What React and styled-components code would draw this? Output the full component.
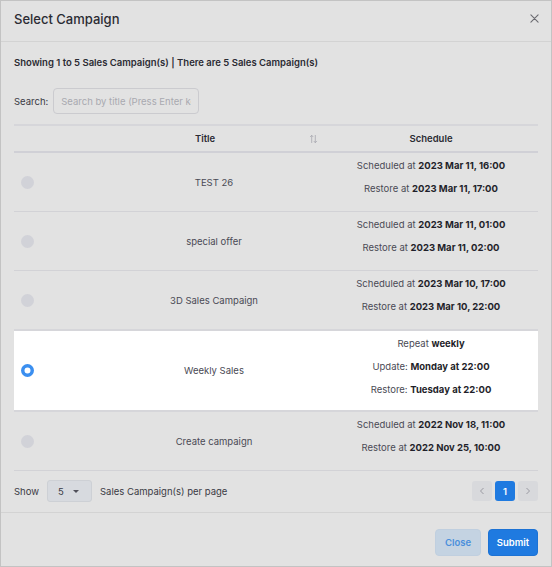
import React, { useState } from 'react';
import styled, { createGlobalStyle, css } from 'styled-components';

const GlobalStyle = createGlobalStyle`
  * { box-sizing: border-box; }
  body {
    margin: 0;
    background: #e2e2e2;
    font-family: Inter, "Noto Sans", sans-serif;
    color: #3a3a44;
  }
`;

const Modal = styled.div`
  width: 552px;
  height: 567px;
  background: #e2e2e2;
  border: 1px solid #c3c3c3;
  display: flex;
  flex-direction: column;
`;

const Header = styled.div`
  height: 41px;
  flex-shrink: 0;
  display: flex;
  align-items: center;
  justify-content: space-between;
  padding: 0 11px 5px 13px;
  border-bottom: 1px solid #d3d3d3;
`;

const Title = styled.h1`
  margin: 0;
  font-size: 13px;
  font-weight: 500;
  color: #2b2b33;
`;

const CloseIcon = styled.button`
  appearance: none;
  border: 0;
  background: none;
  padding: 0;
  width: 12px;
  height: 12px;
  display: flex;
  align-items: center;
  justify-content: center;
  color: #6a6a70;
`;

const Body = styled.div`
  flex: 1;
  padding: 14px 13px 10px 13px;
  display: flex;
  flex-direction: column;
  border-bottom: 1px solid #d3d3d3;
`;

const Summary = styled.div`
  font-size: 9.5px;
  font-weight: 600;
  color: #2b2b33;
  line-height: 14px;
`;

const SearchRow = styled.label`
  display: flex;
  align-items: center;
  gap: 5px;
  margin-top: 18px;
  font-size: 9.5px;
  color: #3a3a44;
`;

const SearchInput = styled.input`
  width: 146px;
  height: 26px;
  border: 1px solid #cbcbcf;
  border-radius: 4px;
  background: transparent;
  padding: 0 7px;
  font-family: inherit;
  font-size: 9.5px;
  outline: none;
  &::placeholder { color: #a9a9b0; }
`;

const Table = styled.table`
  margin-top: 10px;
  width: 100%;
  border-collapse: collapse;
  table-layout: fixed;
  border-top: 2px solid #d6d6da;
`;

const Th = styled.th`
  height: 27px;
  font-size: 9.5px;
  font-weight: 600;
  color: #2b2b33;
  text-align: center;
  border-bottom: 2px solid #d0d0d6;
  padding: 0;
  width: ${({ $w }) => $w || 'auto'};
`;

const HeadInner = styled.div`
  display: flex;
  align-items: center;
  justify-content: center;
  position: relative;
  padding-right: 18px;
`;

const SortIcon = styled.span`
  position: absolute;
  right: 6px;
  top: 50%;
  transform: translateY(-50%);
  display: flex;
  color: #a8a8b0;
`;

const Tr = styled.tr`
  border-bottom: 1px solid #d2d2d6;
  ${({ $selected }) => $selected && css`
    background: #ffffff;
    border-top: 2px solid #d6d6da;
    border-bottom: 2px solid #d6d6da;
  `}
`;

const Td = styled.td`
  padding: ${({ $selected }) => ($selected ? '1px 0 9px' : '1px 0 11px')};
  font-size: 9.5px;
  color: #4a4a55;
  text-align: center;
  vertical-align: middle;
`;

const CenterCell = styled(Td)`
  padding: 0;
`;

const RadioCell = styled(CenterCell)`
  text-align: left;
  padding-left: 7px;
`;

const Radio = styled.span`
  display: inline-block;
  width: 13px;
  height: 13px;
  border-radius: 50%;
  vertical-align: middle;
  ${({ $checked }) => $checked ? css`
    background: #fff;
    box-shadow: inset 0 0 0 3.5px #3b8ff0;
  ` : css`
    background: #d1d2d8;
  `}
`;

const Line = styled.div`
  line-height: 23px;
  color: #4a4a55;
  b { font-weight: 700; color: #1f1f2a; }
`;

const Footer = styled.div`
  display: flex;
  align-items: center;
  justify-content: space-between;
  margin-top: 9px;
`;

const ShowGroup = styled.div`
  display: flex;
  align-items: center;
  gap: 8px;
  font-size: 9.5px;
  color: #3a3a44;
`;

const PageSelect = styled.div`
  width: 45px;
  height: 22px;
  border: 1px solid #cdd0d5;
  background: #d7dadf;
  border-radius: 3px;
  display: flex;
  align-items: center;
  justify-content: space-between;
  padding: 0 12px 0 10px;
  font-size: 9.5px;
  color: #3a3a44;
`;

const Caret = styled.span`
  width: 0;
  height: 0;
  border-left: 3px solid transparent;
  border-right: 3px solid transparent;
  border-top: 3.5px solid #50505a;
`;

const Pager = styled.div`
  display: flex;
  gap: 3px;
`;

const PageBtn = styled.button`
  appearance: none;
  width: 20px;
  height: 20px;
  border: 0;
  border-radius: 3px;
  padding: 0;
  display: flex;
  align-items: center;
  justify-content: center;
  font-family: inherit;
  font-size: 9.5px;
  font-weight: 600;
  ${({ $active }) => $active ? css`
    background: #1f7ae0;
    color: #fff;
  ` : css`
    background: #d8d9dc;
    color: #9a9aa2;
  `}
`;

const Actions = styled.div`
  height: 55px;
  flex-shrink: 0;
  display: flex;
  align-items: center;
  justify-content: flex-end;
  gap: 7px;
  padding: 4px 13px 0 0;
`;

const Button = styled.button`
  appearance: none;
  height: 27px;
  border-radius: 4px;
  font-family: inherit;
  font-size: 9.5px;
  font-weight: 600;
  padding: 0;
  width: ${({ $w }) => $w}px;
  ${({ $primary }) => $primary ? css`
    background: #1f7ae0;
    border: 1px solid #1c72d4;
    color: #fff;
  ` : css`
    background: #c4d3e2;
    border: 1px solid #c0cfdf;
    color: #4a8fdc;
  `}
`;

const campaigns = [
  { id: 1, title: 'TEST 26', lines: [['Scheduled at ', '2023 Mar 11, 16:00'], ['Restore at ', '2023 Mar 11, 17:00']] },
  { id: 2, title: 'special offer', lines: [['Scheduled at ', '2023 Mar 11, 01:00'], ['Restore at ', '2023 Mar 11, 02:00']] },
  { id: 3, title: '3D Sales Campaign', lines: [['Scheduled at ', '2023 Mar 10, 17:00'], ['Restore at ', '2023 Mar 10, 22:00']] },
  { id: 4, title: 'Weekly Sales', lines: [['Repeat ', 'weekly'], ['Update: ', 'Monday at 22:00'], ['Restore: ', 'Tuesday at 22:00']] },
  { id: 5, title: 'Create campaign', lines: [['Scheduled at ', '2022 Nov 18, 11:00'], ['Restore at ', '2022 Nov 25, 10:00']] },
];

const App = () => {
  const [selected, setSelected] = useState(4);
  return (
    <>
      <GlobalStyle />
      <Modal>
        <Header>
          <Title>Select Campaign</Title>
          <CloseIcon type="button" aria-label="Close">
            <svg width="9" height="9" viewBox="0 0 10 10" fill="none" stroke="currentColor" strokeWidth="1.2" strokeLinecap="round">
              <path d="M1 1L9 9M9 1L1 9" />
            </svg>
          </CloseIcon>
        </Header>
        <Body>
          <Summary>Showing 1 to 5 Sales Campaign(s) | There are 5 Sales Campaign(s)</Summary>
          <SearchRow>
            Search:
            <SearchInput placeholder="Search by title (Press Enter key)" />
          </SearchRow>
          <Table>
            <thead>
              <tr>
                <Th $w="90px" />
                <Th $w="220px">
                  <HeadInner>
                    Title
                    <SortIcon>
                      <svg width="9" height="9" viewBox="0 0 10 10" fill="none" stroke="currentColor" strokeWidth="0.9" strokeLinecap="round">
                        <path d="M3 9V1M1.5 2.5L3 1L4.5 2.5" />
                        <path d="M7 1V9M5.5 7.5L7 9L8.5 7.5" />
                      </svg>
                    </SortIcon>
                  </HeadInner>
                </Th>
                <Th>Schedule</Th>
              </tr>
            </thead>
            <tbody>
              {campaigns.map(c => {
                const isSel = selected === c.id;
                return (
                  <Tr key={c.id} $selected={isSel} onClick={() => setSelected(c.id)}>
                    <RadioCell>
                      <Radio $checked={isSel} />
                    </RadioCell>
                    <CenterCell>{c.title}</CenterCell>
                    <Td $selected={isSel}>
                      {c.lines.map(([label, value]) => (
                        <Line key={label}>
                          {label}<b>{value}</b>
                        </Line>
                      ))}
                    </Td>
                  </Tr>
                );
              })}
            </tbody>
          </Table>
          <Footer>
            <ShowGroup>
              Show
              <PageSelect>
                5
                <Caret />
              </PageSelect>
              Sales Campaign(s) per page
            </ShowGroup>
            <Pager>
              <PageBtn type="button">
                <svg width="6" height="8" viewBox="0 0 6 8" fill="none" stroke="currentColor" strokeWidth="1"><path d="M4.5 1L1.5 4L4.5 7" /></svg>
              </PageBtn>
              <PageBtn type="button" $active>1</PageBtn>
              <PageBtn type="button">
                <svg width="6" height="8" viewBox="0 0 6 8" fill="none" stroke="currentColor" strokeWidth="1"><path d="M1.5 1L4.5 4L1.5 7" /></svg>
              </PageBtn>
            </Pager>
          </Footer>
        </Body>
        <Actions>
          <Button type="button" $w={46}>Close</Button>
          <Button type="button" $primary $w={50}>Submit</Button>
        </Actions>
      </Modal>
    </>
  );
};

export default App;
